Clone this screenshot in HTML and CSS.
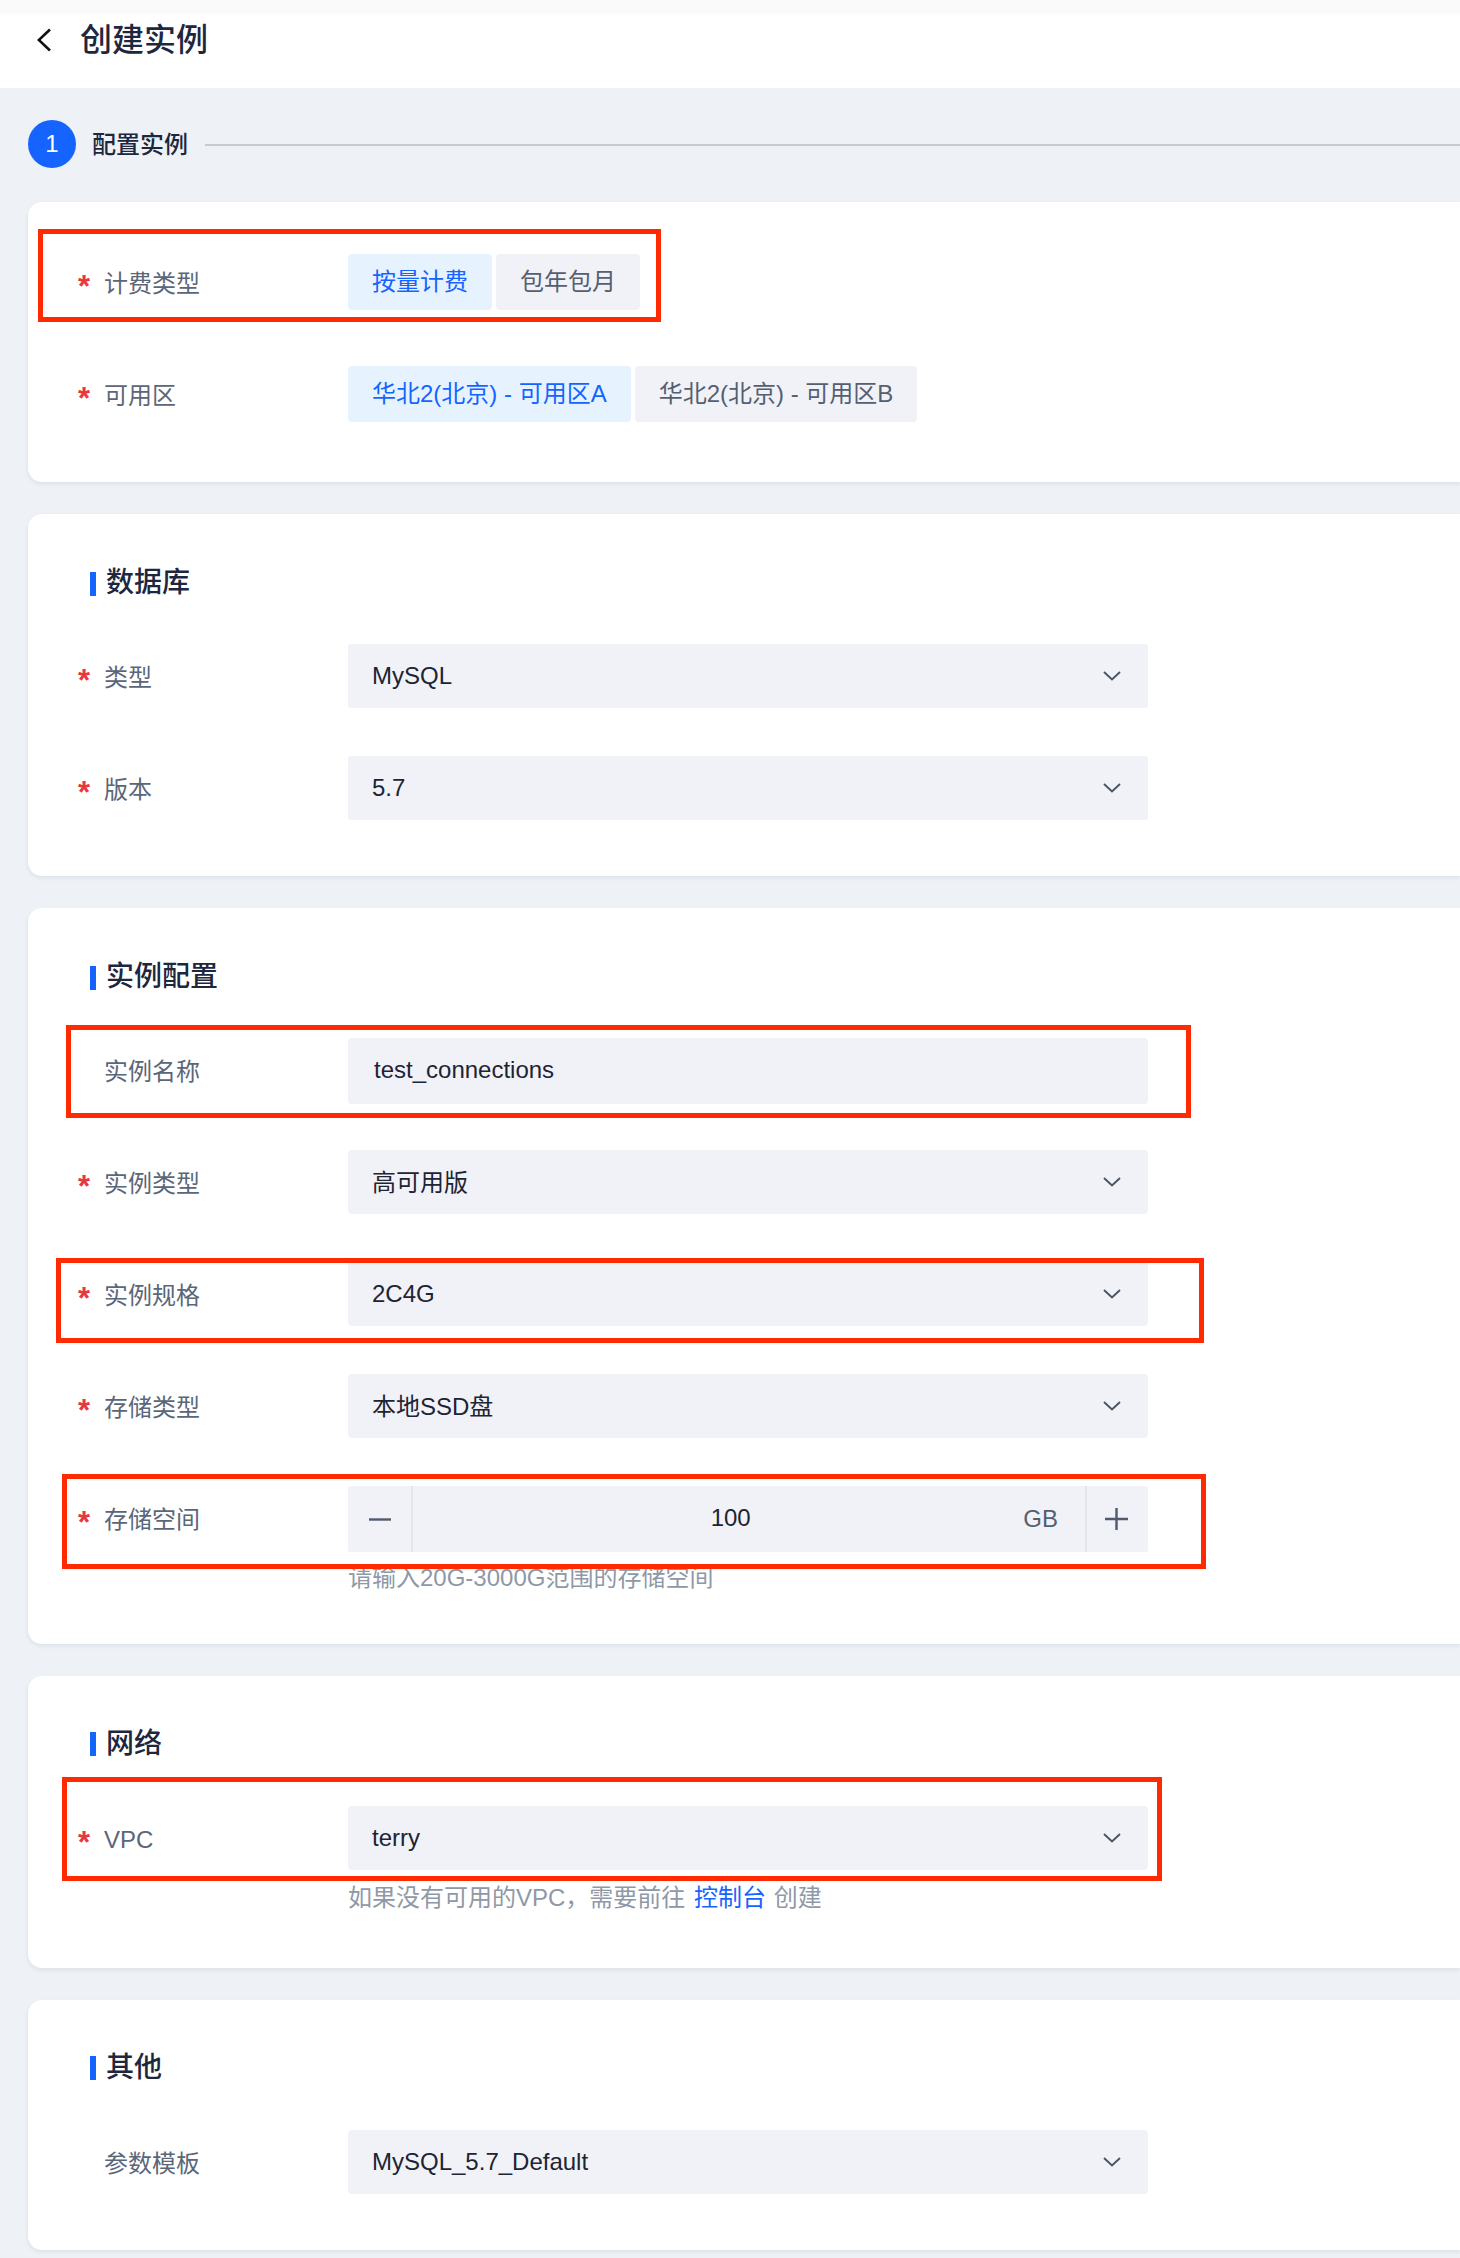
FILE: index.html
```html
<!DOCTYPE html>
<html lang="zh-CN">
<head>
<meta charset="utf-8">
<title>创建实例</title>
<link rel="stylesheet" href="styles.css">
</head>
<body>
<header class="topbar">
  <svg class="back" viewBox="0 0 14 24" width="14" height="24"><path d="M13 1.5 1.8 12 13 22.5"/></svg>
  <h1 class="page-title">创建实例</h1>
</header>
<main class="content">
  <div class="steps">
    <span class="step-num">1</span>
    <span class="step-name">配置实例</span>
    <span class="step-line"></span>
  </div>

  <section class="card card-plain">
    <div class="fields fields-wide">
      <div class="field">
        <span class="mark mark-billing"></span>
        <label class="label"><i class="star">*</i>计费类型</label>
        <div class="choices">
          <button class="choice active">按量计费</button>
          <button class="choice">包年包月</button>
        </div>
      </div>
      <div class="field">
        <label class="label"><i class="star">*</i>可用区</label>
        <div class="choices">
          <button class="choice active">华北2(北京) - 可用区A</button>
          <button class="choice">华北2(北京) - 可用区B</button>
        </div>
      </div>
    </div>
  </section>

  <section class="card card-db">
    <h2 class="section-title">数据库</h2>
    <div class="fields">
      <div class="field">
        <label class="label"><i class="star">*</i>类型</label>
        <div class="select"><span>MySQL</span><svg class="chev" viewBox="0 0 18 10" width="18" height="10"><path d="M1 1l8 7.5L17 1"/></svg></div>
      </div>
      <div class="field">
        <label class="label"><i class="star">*</i>版本</label>
        <div class="select"><span>5.7</span><svg class="chev" viewBox="0 0 18 10" width="18" height="10"><path d="M1 1l8 7.5L17 1"/></svg></div>
      </div>
    </div>
  </section>

  <section class="card card-instance">
    <h2 class="section-title">实例配置</h2>
    <div class="fields">
      <div class="field field-input">
        <span class="mark mark-name"></span>
        <label class="label label-plain">实例名称</label>
        <div class="input">test_connections</div>
      </div>
      <div class="field">
        <label class="label"><i class="star">*</i>实例类型</label>
        <div class="select select-cjk"><span>高可用版</span><svg class="chev" viewBox="0 0 18 10" width="18" height="10"><path d="M1 1l8 7.5L17 1"/></svg></div>
      </div>
      <div class="field">
        <span class="mark mark-spec"></span>
        <label class="label"><i class="star">*</i>实例规格</label>
        <div class="select"><span>2C4G</span><svg class="chev" viewBox="0 0 18 10" width="18" height="10"><path d="M1 1l8 7.5L17 1"/></svg></div>
      </div>
      <div class="field">
        <label class="label"><i class="star">*</i>存储类型</label>
        <div class="select select-cjk"><span>本地SSD盘</span><svg class="chev" viewBox="0 0 18 10" width="18" height="10"><path d="M1 1l8 7.5L17 1"/></svg></div>
      </div>
      <div class="field field-top">
        <span class="mark mark-storage"></span>
        <label class="label label-stepper"><i class="star">*</i>存储空间</label>
        <div class="control">
          <div class="stepper">
            <span class="step-btn step-minus"><svg viewBox="0 0 22 3" width="22" height="3"><path d="M0 1.5h22"/></svg></span>
            <span class="step-value">100</span>
            <span class="step-unit">GB</span>
            <span class="step-btn step-plus"><svg viewBox="0 0 23 22" width="23" height="22"><path d="M0 11h23M11.5 0v22"/></svg></span>
          </div>
          <p class="hint hint-storage">请输入20G-3000G范围的存储空间</p>
        </div>
      </div>
    </div>
  </section>

  <section class="card card-network">
    <h2 class="section-title">网络</h2>
    <div class="fields">
      <div class="field field-top">
        <span class="mark mark-vpc"></span>
        <label class="label label-select"><i class="star">*</i>VPC</label>
        <div class="control">
          <div class="select"><span>terry</span><svg class="chev" viewBox="0 0 18 10" width="18" height="10"><path d="M1 1l8 7.5L17 1"/></svg></div>
          <p class="hint hint-vpc">如果没有可用的VPC，需要前往 <a class="link" href="#">控制台</a> 创建</p>
        </div>
      </div>
    </div>
  </section>

  <section class="card card-other">
    <h2 class="section-title">其他</h2>
    <div class="fields">
      <div class="field">
        <label class="label label-plain">参数模板</label>
        <div class="select"><span>MySQL_5.7_Default</span><svg class="chev" viewBox="0 0 18 10" width="18" height="10"><path d="M1 1l8 7.5L17 1"/></svg></div>
      </div>
    </div>
  </section>
</main>
</body>
</html>
```
FILE: styles.css
```css
* { box-sizing: border-box; }
html, body { margin: 0; padding: 0; }
body {
  width: 1460px;
  height: 2258px;
  overflow: hidden;
  background: #eef1f6;
  font-family: "Liberation Sans", "Noto Sans CJK SC", sans-serif;
  font-size: 24px;
  color: #1d2433;
}

.topbar {
  height: 88px;
  display: flex;
  align-items: center;
  padding: 0 0 8px 37px;
  background: linear-gradient(#fafafa 0, #fafafa 12px, #fff 16px);
}
.back { fill: none; stroke: #111; stroke-width: 2.6; }
.page-title {
  margin: 0 0 0 29px;
  font-size: 32px;
  font-weight: 500;
  line-height: 40px;
  height: 40px;
  color: #1d2740;
}

.content { padding: 32px 0 0 28px; }

.steps { display: flex; align-items: center; height: 48px; margin-bottom: 34px; }
.step-num {
  width: 48px; height: 48px; border-radius: 50%;
  background: #1664ff; color: #fff;
  display: flex; align-items: center; justify-content: center;
  font-size: 24px;
}
.step-name { margin: -3px 0 0 16px; font-weight: 500; color: #1d2740; }
.step-line { flex: 1; height: 2px; margin-left: 17px; margin-top: 2px; background: #c6cad1; }

.card {
  position: relative;
  background: #fff;
  border-radius: 14px 0 0 14px;
  padding-left: 50px;
  margin-bottom: 32px;
  box-shadow: 0 2px 4px rgba(30, 40, 70, .08);
}
.card-plain { padding-top: 52px; padding-bottom: 60px; }
.card-db { padding-top: 58px; padding-bottom: 56px; }
.card-instance { padding-top: 58px; padding-bottom: 48px; }
.card-network { padding-top: 56px; padding-bottom: 52px; }
.card-other { padding-top: 56px; padding-bottom: 56px; margin-bottom: 0; }

.section-title {
  display: flex;
  align-items: center;
  height: 24px;
  margin: 0 0 48px 12px;
  padding-bottom: 3px;
  font-size: 28px;
  font-weight: 500;
  color: #1d2740;
  line-height: 24px;
}
.section-title::before {
  content: "";
  flex: none;
  width: 6px; height: 24px;
  margin: 3px 10px 0 0;
  background: #1664ff;
}
.card-network .section-title,
.card-other .section-title { margin-bottom: 50px; padding-bottom: 0; }
.card-network .section-title::before,
.card-other .section-title::before { margin-top: 0; }

.fields { display: flex; flex-direction: column; gap: 48px; }
.fields-wide { gap: 56px; }

.field { position: relative; display: flex; align-items: center; }
.field-top { align-items: flex-start; }
.field-input { margin-bottom: -2px; }
.field-input .label { padding-top: 2px; }

.label {
  flex: none;
  width: 270px;
  display: flex;
  align-items: center;
  padding-top: 4px;
  color: #5b6678;
  line-height: 36px;
}
.label-plain { padding-left: 26px; }
.label-stepper { padding-top: 16px; }
.label-select { padding-top: 16px; }
.star {
  flex: none;
  width: 26px;
  font-style: normal;
  font-size: 31px;
  font-weight: 700;
  line-height: 36px;
  color: #e8383d;
  height: 30px;
}

.choices { display: flex; gap: 4px; }
.choice {
  height: 56px;
  padding: 0 24px 5px;
  border: 0;
  border-radius: 4px;
  background: #f1f2f7;
  color: #545f72;
  font: inherit;
}
.choice.active { background: #e6f3ff; color: #1664ff; }

.control { flex: none; width: 800px; }
.select, .input, .stepper {
  width: 800px;
  display: flex;
  align-items: center;
  background: #f1f2f7;
  border-radius: 4px;
}
.select { height: 64px; justify-content: space-between; padding: 0 27px 0 24px; }
.select-cjk span { margin-top: -3px; }
.input { height: 66px; padding: 0 0 2px 26px; }
.chev { fill: none; stroke: #4b5568; stroke-width: 2; }

.stepper { height: 66px; border-radius: 2px; }
.step-btn { flex: none; height: 100%; display: flex; align-items: center; justify-content: center; }
.step-btn svg { fill: none; stroke: #4f5a6e; stroke-width: 2.4; }
.step-minus { width: 65px; border-right: 2px solid #e3e6ec; }
.step-plus { width: 63px; padding-right: 3px; border-left: 2px solid #e3e6ec; }
.step-value { flex: 1; text-align: center; padding: 0 0 2px 25px; }
.step-unit { flex: none; padding-right: 27px; color: #545f72; }

.hint { margin: 0; line-height: 36px; color: #8f98a6; }
.hint-storage { margin-top: 8px; }
.hint-vpc { margin-top: 10px; }
.link { margin: 0 1px 0 2px; color: #1664ff; text-decoration: none; }

.mark {
  position: absolute;
  z-index: 2;
  border: 5px solid #ff2a00;
  pointer-events: none;
}
.mark-billing { top: -25px; left: -40px; width: 623px; height: 93px; }
.mark-name { top: -13px; left: -12px; width: 1125px; height: 93px; }
.mark-spec { top: -4px; left: -22px; width: 1148px; height: 85px; }
.mark-storage { top: -12px; left: -16px; width: 1144px; height: 95px; }
.mark-vpc { top: -29px; left: -16px; width: 1100px; height: 104px; }
```
